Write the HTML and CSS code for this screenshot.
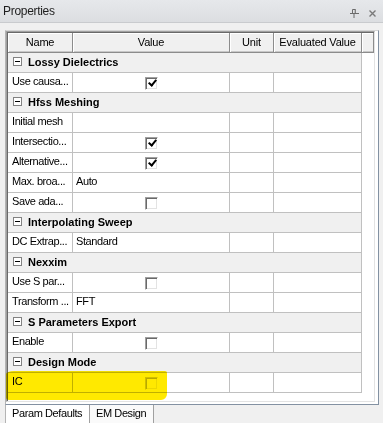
FILE: index.html
```html
<!DOCTYPE html>
<html lang="en">
<head>
    <meta charset="UTF-8">
    <meta name="viewport" content="width=device-width, initial-scale=1.0">
    <title>Properties</title>
    <link rel="stylesheet" href="styles.css">
</head>
<body>
    <div class="panel">
        <!-- Title bar -->
        <div class="titlebar">
            <span class="title">Properties</span>
            <svg class="pin" width="9" height="9" viewBox="0 0 9 9">
                <path d="M2.5 4.5V0.5H5.5V4.5M0 4.5H9M4 4.5V9" stroke="#6b6b6b" fill="none"/>
                <path d="M5 1V4" stroke="#9a9a9a"/>
            </svg>
            <svg class="close" width="7" height="7" viewBox="0 0 7 7">
                <path d="M0.5 0.5L6.5 6.5M6.5 0.5L0.5 6.5" stroke="#7a7a7a" stroke-width="1.4"/>
            </svg>
        </div>

        <!-- Property grid -->
        <div class="page">
            <div class="grid">
                <div class="grid-inner">
                    <div class="row head">
                        <div class="h">Name</div>
                        <div class="h">Value</div>
                        <div class="h">Unit</div>
                        <div class="h">Evaluated Value</div>
                        <div class="h"></div>
                    </div>

                    <div class="row"><div class="grp"><span class="toggle"></span>Lossy Dielectrics</div></div>
                    <div class="row">
                        <div class="c name">Use causa...</div>
                        <div class="c val"><span class="chk on"></span></div>
                        <div class="c"></div><div class="c"></div>
                    </div>

                    <div class="row"><div class="grp"><span class="toggle"></span>Hfss Meshing</div></div>
                    <div class="row">
                        <div class="c name">Initial mesh</div>
                        <div class="c"></div>
                        <div class="c"></div><div class="c"></div>
                    </div>
                    <div class="row">
                        <div class="c name">Intersectio...</div>
                        <div class="c val"><span class="chk on"></span></div>
                        <div class="c"></div><div class="c"></div>
                    </div>
                    <div class="row">
                        <div class="c name">Alternative...</div>
                        <div class="c val"><span class="chk on"></span></div>
                        <div class="c"></div><div class="c"></div>
                    </div>
                    <div class="row">
                        <div class="c name">Max. broa...</div>
                        <div class="c">Auto</div>
                        <div class="c"></div><div class="c"></div>
                    </div>
                    <div class="row">
                        <div class="c name">Save ada...</div>
                        <div class="c val"><span class="chk"></span></div>
                        <div class="c"></div><div class="c"></div>
                    </div>

                    <div class="row"><div class="grp"><span class="toggle"></span>Interpolating Sweep</div></div>
                    <div class="row">
                        <div class="c name">DC Extrap...</div>
                        <div class="c">Standard</div>
                        <div class="c"></div><div class="c"></div>
                    </div>

                    <div class="row"><div class="grp"><span class="toggle"></span>Nexxim</div></div>
                    <div class="row">
                        <div class="c name">Use S par...</div>
                        <div class="c val"><span class="chk"></span></div>
                        <div class="c"></div><div class="c"></div>
                    </div>
                    <div class="row">
                        <div class="c name">Transform ...</div>
                        <div class="c">FFT</div>
                        <div class="c"></div><div class="c"></div>
                    </div>

                    <div class="row"><div class="grp"><span class="toggle"></span>S Parameters Export</div></div>
                    <div class="row">
                        <div class="c name">Enable</div>
                        <div class="c val"><span class="chk"></span></div>
                        <div class="c"></div><div class="c"></div>
                    </div>

                    <div class="row"><div class="grp"><span class="toggle"></span>Design Mode</div></div>
                    <div class="row">
                        <div class="c name">IC</div>
                        <div class="c val"><span class="chk dis"></span></div>
                        <div class="c"></div><div class="c"></div>
                    </div>
                </div>
            </div>
        </div>

        <!-- Tabs -->
        <div class="tabs">
            <div class="tab active">Param Defaults</div>
            <div class="tab">EM Design</div>
        </div>

        <!-- highlighter mark -->
        <div class="marker"></div>
    </div>
</body>
</html>
```

FILE: styles.css
```css
/* Properties panel */
body {
    margin: 0;
    padding: 0;
    background-color: #f0f0f0;
    font-family: "Liberation Sans", Arial, sans-serif;
    font-size: 11px;
    color: #000;
}
.panel {
    position: relative;
    width: 383px;
    height: 423px;
    overflow: hidden;
}

/* title bar */
.titlebar {
    display: flex;
    align-items: flex-start;
    height: 22px;
    border-bottom: 1px solid #c9cbce;
    background: linear-gradient(#e6e8eb, #dcdee1);
}
.title {
    padding-left: 3px;
    font-size: 12px;
    line-height: 22px;
    letter-spacing: -0.3px;
    color: #1e1e1e;
}
.pin {
    display: block;
    margin: 9px 0 0 auto;
}
.close {
    display: block;
    margin: 10px 7px 0 10px;
}

/* tab page */
.page {
    margin: 7px 0 0 5px;
    padding: 0 3px 2px 0;
    box-sizing: border-box;
    width: 374px;
    height: 375px;
    border: 1px solid;
    border-color: #d4d4d4 #8391a2 #8391a2 #b4b4b4;
    background: #fff;
}
.grid {
    width: 369px;
    border: 1px solid;
    border-color: #a0a0a0 #e3e3e3 #e3e3e3 #a0a0a0;
    box-sizing: border-box;
    background: #fff;
}
.grid-inner {
    height: 368px;
    border-top: 1px solid #696969;
    border-left: 1px solid #696969;
}

.row {
    display: grid;
    grid-template-columns: 65px 157px 44px 88px 12px;
    height: 20px;
}
.row > div {
    box-sizing: border-box;
    white-space: nowrap;
    overflow: hidden;
}

/* header */
.h {
    background: #f0f0f0;
    border-right: 1px solid #8c8c8c;
    border-bottom: 1px solid #8c8c8c;
    box-shadow: inset 1px 1px #fff, inset 0 -1px #c8c8c8;
    text-align: center;
    line-height: 19px;
    letter-spacing: -0.2px;
}

/* cells */
.c {
    border-right: 1px solid #c0c0c0;
    border-bottom: 1px solid #c0c0c0;
    padding-left: 3px;
    line-height: 17px;
    letter-spacing: -0.4px;
}
.c.name {
    padding-left: 4px;
}
.c.val {
    display: flex;
    justify-content: center;
    align-items: center;
    padding-left: 0;
}

/* category rows */
.grp {
    grid-column: 1 / 5;
    display: flex;
    align-items: flex-start;
    background: #f0f0f0;
    border-right: 1px solid #c0c0c0;
    border-bottom: 1px solid #c0c0c0;
    font-weight: bold;
    line-height: 19px;
}
.toggle {
    position: relative;
    flex: none;
    width: 9px;
    height: 9px;
    margin: 4px 6px 0 5px;
    box-sizing: border-box;
    border: 1px solid #828282;
    background: #fff;
}
.toggle::after {
    content: "";
    position: absolute;
    left: 1px;
    top: 3px;
    width: 5px;
    height: 1px;
    background: #000;
}

/* check boxes */
.chk {
    position: relative;
    width: 13px;
    height: 13px;
    margin-top: 1px;
    box-sizing: border-box;
    border: 1px solid;
    border-color: #a0a0a0 #fff #fff #a0a0a0;
    box-shadow: inset 1px 1px #696969, inset -1px -1px #e3e3e3;
    background: #fff;
}
.chk.on::after {
    content: "";
    position: absolute;
    left: 4px;
    top: 0;
    width: 3px;
    height: 6px;
    border: solid #000;
    border-width: 0 2px 2px 0;
    transform: rotate(40deg);
}
.chk.dis {
    border-color: #d0d0d0 #fff #fff #d0d0d0;
    box-shadow: inset 1px 1px #b8b8b8, inset -1px -1px #ececec;
}

/* tabs */
.tabs {
    display: flex;
    margin-left: 5px;
}
.tab {
    height: 18px;
    padding: 0 6px;
    line-height: 16px;
    letter-spacing: -0.4px;
    white-space: nowrap;
    border-right: 1px solid #a0a0a0;
    border-bottom: 1px solid #a0a0a0;
}
.tab.active {
    width: 71px;
    background: #fff;
    border-left: 1px solid #b4b4b4;
}
.tab:not(.active) {
    width: 51px;
    background: #fafafa;
}

/* yellow highlight over the last row */
.marker {
    position: absolute;
    left: 6px;
    top: 371px;
    width: 161px;
    height: 29px;
    background: #ffe900;
    mix-blend-mode: multiply;
    border-radius: 8px 2px 6px 3px / 3px 2px 6px 3px;
}
```
